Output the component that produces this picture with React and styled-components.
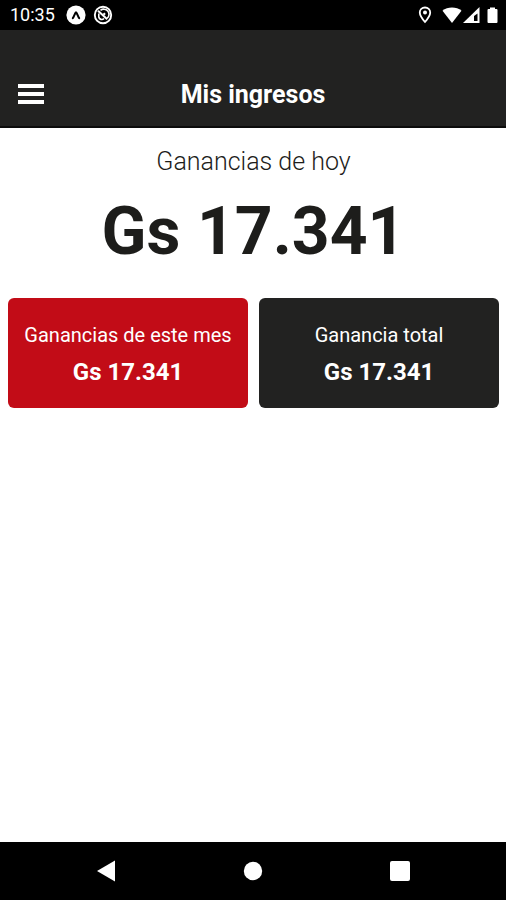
import React, { useState } from "react";
import styled, { createGlobalStyle } from "styled-components";

const earnings = {
  today: "Gs 17.341",
  month: "Gs 17.341",
  total: "Gs 17.341",
};

const StatusBar = () => (
  <Status>
    <div className="group">
      <time>10:35</time>
      <svg width="20" height="20" viewBox="0 0 20 20" aria-hidden="true">
        <circle cx="10" cy="10" r="9.6" fill="#fff" />
        <path
          d="M6.8 13.2C8.2 11.4 8.800 8 10 7.300c1.200.7 1.800 4.100 3.200 5.900"
          fill="none"
          stroke="#000"
          strokeWidth="2"
          strokeLinecap="round"
        />
      </svg>
      <svg width="20" height="20" viewBox="0 0 20 20" aria-hidden="true">
        <g fill="none" stroke="#fff">
          <circle cx="10" cy="10" r="8.200" strokeWidth="1.900" />
          <path d="M7.500 5.400A5 5 0 0 1 14.200 13.200" strokeWidth="1.600" />
          <path d="M5 5.800l9.200 8.400" strokeWidth="2" />
          <path d="M5.800 8.500v3.500a3 3 0 0 0 5.200 1.500" strokeWidth="1.600" />
          <path d="M10.500 8.200l1.500 1.500" strokeWidth="2.200" />
        </g>
      </svg>
    </div>
    <div className="icons">
      <svg width="14" height="18" viewBox="0 0 14 18" aria-hidden="true">
        <path
          d="M7 1.500c-3 0-5.200 2.200-5.200 5 0 3.500 5.200 9.500 5.200 9.500s5.200-6 5.200-9.500c0-2.800-2.200-5-5.200-5z"
          fill="none"
          stroke="#fff"
          strokeWidth="1.800"
        />
        <circle cx="7" cy="6.500" r="2" fill="#fff" />
      </svg>
      <svg width="56" height="18" viewBox="0 0 56 18" aria-hidden="true">
        <path d="M10 17L.5 4.800C5.500.4 14.500.4 19.500 4.800z" fill="#fff" />
        <path d="M37.500 1v16H21z" fill="#fff" />
        <path d="M35.500 7.500v7.500h-3.500V10z" fill="#000" />
        <path
          d="M48 1.500h5V3h1.500q1 0 1 1v12q0 1-1 1h-8q-1 0-1-1V4q0-1 1-1H48z"
          fill="#fff"
        />
      </svg>
    </div>
  </Status>
);

export default function App() {
  const [menuOpen, setMenuOpen] = useState(false);

  return (
    <Screen>
      <GlobalStyle />
      <StatusBar />
      <Header>
        <MenuButton
          type="button"
          aria-label="Menú"
          aria-expanded={menuOpen}
          onClick={() => setMenuOpen(!menuOpen)}
        >
          <svg width="26" height="20" viewBox="0 0 26 20">
            <path d="M0 0h26v4H0zM0 8h26v4H0zM0 16h26v4H0z" fill="#fff" />
          </svg>
        </MenuButton>
        <h1>Mis ingresos</h1>
      </Header>
      <Main>
        <Today>
          <h2>Ganancias de hoy</h2>
          <p>{earnings.today}</p>
        </Today>
        <Cards>
          <Card $color="#c20c17">
            <h3>Ganancias de este mes</h3>
            <p>{earnings.month}</p>
          </Card>
          <Card $color="#222221">
            <h3>Ganancia total</h3>
            <p>{earnings.total}</p>
          </Card>
        </Cards>
      </Main>
      <NavBar>
        <button type="button" aria-label="Atrás">
          <svg width="20" height="22" viewBox="0 0 20 22">
            <path d="M19 .5v21L1 11z" fill="#fff" />
          </svg>
        </button>
        <button type="button" aria-label="Inicio">
          <svg width="20" height="20" viewBox="0 0 20 20">
            <circle cx="10" cy="10" r="9.200" fill="#fff" />
          </svg>
        </button>
        <button type="button" aria-label="Recientes">
          <svg width="20" height="20" viewBox="0 0 20 20">
            <rect width="20" height="20" rx="2" fill="#fff" />
          </svg>
        </button>
      </NavBar>
    </Screen>
  );
}

const GlobalStyle = createGlobalStyle`
  * {
    box-sizing: border-box;
  }
  body {
    margin: 0;
    background: #fff;
    color: #1d1d1b;
    font-family: Roboto, "Liberation Sans", sans-serif;
  }
  h1, h2, h3, p {
    margin: 0;
  }
  button {
    display: flex;
    align-items: center;
    justify-content: center;
    padding: 0;
    border: 0;
    background: none;
    cursor: pointer;
  }
  svg {
    display: block;
  }
`;

const Screen = styled.div`
  display: flex;
  flex-direction: column;
  min-height: 100vh;
`;

const Status = styled.div`
  display: flex;
  align-items: center;
  justify-content: space-between;
  height: 30px;
  padding: 0 8px 0 10px;
  background: #000;
  color: #fff;
  .group {
    display: flex;
    align-items: center;
    gap: 7px;
  }
  time {
    font-size: 18px;
    line-height: 20px;
    margin-right: 4px;
  }
  .icons {
    display: flex;
    gap: 10px;
  }
`;

const Header = styled.header`
  display: grid;
  grid-template-columns: 48px 1fr 48px;
  align-items: center;
  padding: 34px 7px 2px;
  height: 98px;
  background: #222221;
  border-bottom: 2px solid #0c0c0c;
  color: #fff;
  h1 {
    padding-top: 2px;
    font-size: 25px;
    font-weight: 700;
    line-height: 32px;
    text-align: center;
  }
`;

const MenuButton = styled.button`
  width: 48px;
  height: 48px;
`;

const Main = styled.main`
  flex: 1;
  padding: 16px 7px 16px 8px;
`;

const Today = styled.section`
  text-align: center;
  h2 {
    font-size: 25px;
    font-weight: 300;
    line-height: 36px;
  }
  p {
    font-size: 66px;
    font-weight: 700;
    line-height: 104px;
  }
`;

const Cards = styled.div`
  display: grid;
  grid-template-columns: 1fr 1fr;
  gap: 11px;
  margin-top: 14px;
`;

const Card = styled.section`
  padding: 18px 8px;
  border-radius: 6px;
  background: ${({ $color }) => $color};
  color: #fff;
  text-align: center;
  h3 {
    font-size: 20px;
    font-weight: 400;
    line-height: 38px;
  }
  p {
    font-size: 24px;
    font-weight: 700;
    line-height: 36px;
  }
`;

const NavBar = styled.nav`
  display: flex;
  align-items: center;
  justify-content: space-between;
  height: 58px;
  padding: 0 82px;
  background: #000;
  button {
    width: 48px;
    height: 48px;
  }
`;
